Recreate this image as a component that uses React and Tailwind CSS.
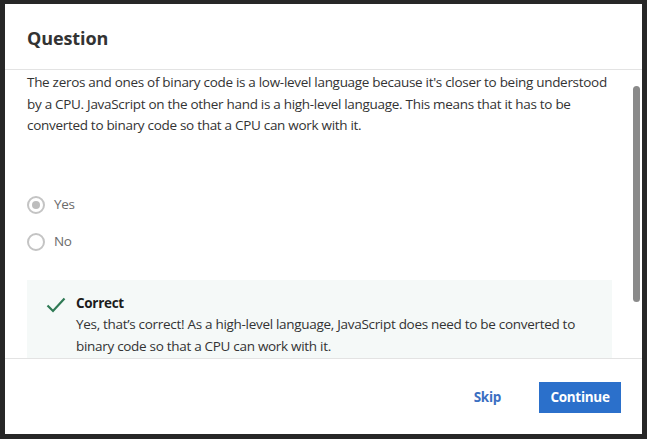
import React from "react";

const font = { fontFamily: '"Source Sans Pro", "Open Sans", "Noto Sans", sans-serif' };

function Radio({ checked, label }) {
  return (
    <div className="flex items-center h-[20px]">
      <span className="w-[18px] h-[18px] rounded-full border-2 border-[#c4c4c4] flex items-center justify-center bg-white">
        {checked && <span className="w-[8px] h-[8px] rounded-full bg-[#bdbdbd]" />}
      </span>
      <span className="ml-[9px] text-[13.5px] text-[#6b6b6b]">{label}</span>
    </div>
  );
}

export default function App() {
  return (
    <div className="w-[647px] h-[439px] bg-[#272727] pl-[5px] pt-[4px] pr-[5px] pb-[5px] tracking-[-0.3px]" style={font}>
      <div className="w-full h-full bg-white flex flex-col">
        <div className="h-[66px] shrink-0 flex items-center pl-[22px] pt-[3px] border-b border-[#e3e3e3]">
          <h1 className="text-[18px] font-bold text-[#333333] tracking-[-0.1px]">Question</h1>
        </div>
        <div className="flex-1 flex overflow-hidden min-h-0">
          <div className="flex-1 min-w-0 pl-[22px] pr-[21px] pt-[2px] text-[13.5px] text-[#333333] leading-[21.5px]">
            <p className="whitespace-nowrap">
              The zeros and ones of binary code is a low-level language because it's closer to being understood<br />
              by a CPU. JavaScript on the other hand is a high-level language. This means that it has to be<br />
              converted to binary code so that a CPU can work with it.
            </p>
            <div className="mt-[58px] flex flex-col gap-[17px]">
              <Radio checked label="Yes" />
              <Radio label="No" />
            </div>
            <div className="mt-[28px] bg-[#f5f9f8] pl-[19px] pt-[13px] pb-[20px] flex">
              <svg width="20" height="16" viewBox="0 0 20 16" className="mt-[4px] shrink-0">
                <path d="M1.5 8.5 L7 14 L18.5 1.5" fill="none" stroke="#2f7a55" strokeWidth="2.2" />
              </svg>
              <div className="ml-[10px]">
                <div className="font-bold text-[#1c1c1c]">Correct</div>
                <p className="whitespace-nowrap">
                  Yes, that’s correct! As a high-level language, JavaScript does need to be converted to<br />
                  binary code so that a CPU can work with it.
                </p>
              </div>
            </div>
          </div>
          <div className="w-[9px] shrink-0 pt-[16px] pr-[1px]">
            <div className="w-[7px] h-[216px] rounded-[4px] bg-[#8a8a8a]" />
          </div>
        </div>
        <div className="h-[76px] shrink-0 border-t border-[#e3e3e3] flex items-center justify-end pr-[21px] pt-[2px]">
          <button className="text-[13.5px] font-bold text-[#3b6fc2] mr-[38px]">Skip</button>
          <button className="w-[82px] h-[31px] bg-[#2b70cb] text-white text-[13.5px] font-bold">Continue</button>
        </div>
      </div>
    </div>
  );
}
